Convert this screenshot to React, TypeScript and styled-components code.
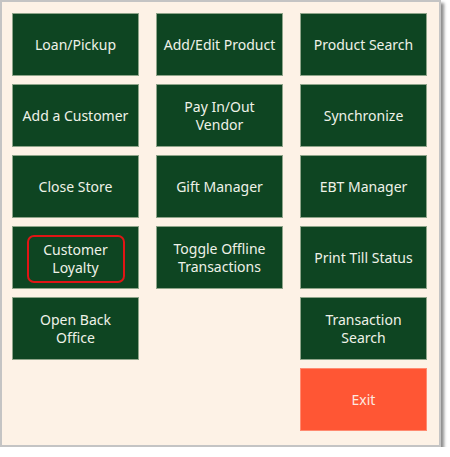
import styled, { createGlobalStyle } from 'styled-components';

const GlobalStyle = createGlobalStyle`
  body {
    margin: 0;
    background: #ffffff;
    font-family: Tahoma, "DejaVu Sans", "Noto Sans", sans-serif;
  }
`;

const Frame = styled.section`
  box-sizing: border-box;
  width: 441px;
  height: 447px;
  border: 2px solid #c4c4c4;
  background-color: #fdf2e6;
  box-shadow: 3px 3px 3px rgba(0, 0, 0, 0.45);
  padding: 11px 12px 0 10px;
`;

const Grid = styled.div`
  display: grid;
  grid-template-columns: repeat(3, 127px);
  grid-auto-rows: 63px;
  column-gap: 17px;
  row-gap: 8px;
`;

const Tile = styled.button<{ $danger?: boolean; $col?: number }>`
  box-sizing: border-box;
  display: flex;
  align-items: center;
  justify-content: center;
  grid-column: ${p => p.$col ?? 'auto'};
  border: 1px solid ${p => (p.$danger ? '#ff8a70' : '#8fa58a')};
  background-color: ${p => (p.$danger ? '#ff5634' : '#0e4522')};
  color: ${p => (p.$danger ? '#fde9e0' : '#eef2e8')};
  font-family: "Noto Sans", "DejaVu Sans", sans-serif;
  font-size: 14px;
  line-height: 18px;
  text-align: center;
  padding: 0 6px;
  cursor: pointer;
`;

const Highlight = styled.span`
  box-sizing: border-box;
  display: flex;
  align-items: center;
  justify-content: center;
  width: 98px;
  height: 48px;
  margin-top: 3px;
  border: 2px solid #e01515;
  border-radius: 7px;
`;

const Label = styled.span`
  display: block;
`;

const Menu = () => {
  return (
    <Frame>
      <Grid>
        <Tile>Loan/Pickup</Tile>
        <Tile>Add/Edit Product</Tile>
        <Tile>Product Search</Tile>
        <Tile>Add a Customer</Tile>
        <Tile><Label>Pay In/Out<br />Vendor</Label></Tile>
        <Tile>Synchronize</Tile>
        <Tile>Close Store</Tile>
        <Tile>Gift Manager</Tile>
        <Tile>EBT Manager</Tile>
        <Tile>
          <Highlight><Label>Customer<br />Loyalty</Label></Highlight>
        </Tile>
        <Tile><Label>Toggle Offline<br />Transactions</Label></Tile>
        <Tile>Print Till Status</Tile>
        <Tile><Label>Open Back<br />Office</Label></Tile>
        <Tile $col={3}><Label>Transaction<br />Search</Label></Tile>
        <Tile $col={3} $danger>Exit</Tile>
      </Grid>
    </Frame>
  );
};

export default function App() {
  return (
    <>
      <GlobalStyle />
      <Menu />
    </>
  );
}
